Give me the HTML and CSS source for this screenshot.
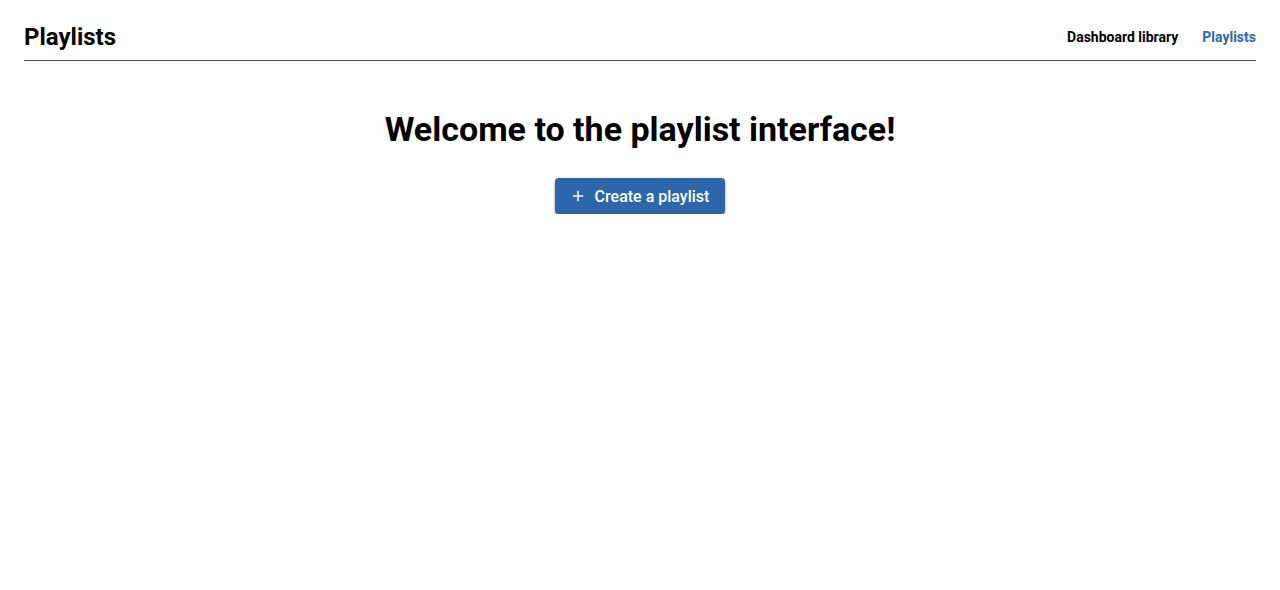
FILE: index.html
```html
<!DOCTYPE html>
<html lang="en">
<head>
<meta charset="utf-8">
<title>Playlists</title>
<link rel="stylesheet" href="styles.css">
</head>
<body>
<div class="page">
  <header class="topbar">
    <h1 class="title">Playlists</h1>
    <nav class="nav">
      <a class="nav-link" href="#">Dashboard library</a>
      <a class="nav-link active" href="#">Playlists</a>
    </nav>
  </header>
  <main class="main">
    <h2 class="welcome">Welcome to the playlist interface!</h2>
    <button class="btn" type="button">
      <svg class="btn-icon" viewBox="0 0 24 24" width="18" height="18" aria-hidden="true"><path d="M19 13h-6v6h-2v-6H5v-2h6V5h2v6h6v2z" fill="currentColor"/></svg>
      <span>Create a playlist</span>
    </button>
  </main>
</div>
</body>
</html>
```
FILE: styles.css
```css
html, body {
  margin: 0;
  padding: 0;
  background: #fff;
}
body {
  font-family: Roboto, "Liberation Sans", sans-serif;
  color: #000;
}
.page {
  padding: 0 24px;
}
.topbar {
  display: flex;
  align-items: center;
  justify-content: space-between;
  height: 46px;
  padding-top: 14px;
  border-bottom: 1px solid #4a4a4a;
}
.title {
  margin: 0;
  font-size: 24px;
  font-weight: 700;
  line-height: 1.2;
}
.nav {
  display: flex;
  gap: 24px;
}
.nav-link {
  font-size: 14px;
  font-weight: 700;
  color: #000;
  text-decoration: none;
}
.nav-link.active {
  color: #2e67ab;
}
.main {
  display: flex;
  flex-direction: column;
  align-items: center;
  padding-top: 48px;
}
.welcome {
  margin: 0;
  font-size: 34px;
  font-weight: 700;
  line-height: 40px;
}
.btn {
  margin-top: 29px;
  display: inline-flex;
  align-items: center;
  gap: 8px;
  height: 36px;
  padding: 0 16px 0 14px;
  border: none;
  border-radius: 4px;
  background: #2d66aa;
  color: #fff;
  font-family: Roboto, "Liberation Sans", sans-serif;
  font-size: 16px;
  font-weight: 500;
  box-shadow: 0 1px 3px rgba(0,0,0,0.3), 0 2px 2px rgba(0,0,0,0.12);
  cursor: pointer;
}
.btn-icon {
  display: block;
}
```
